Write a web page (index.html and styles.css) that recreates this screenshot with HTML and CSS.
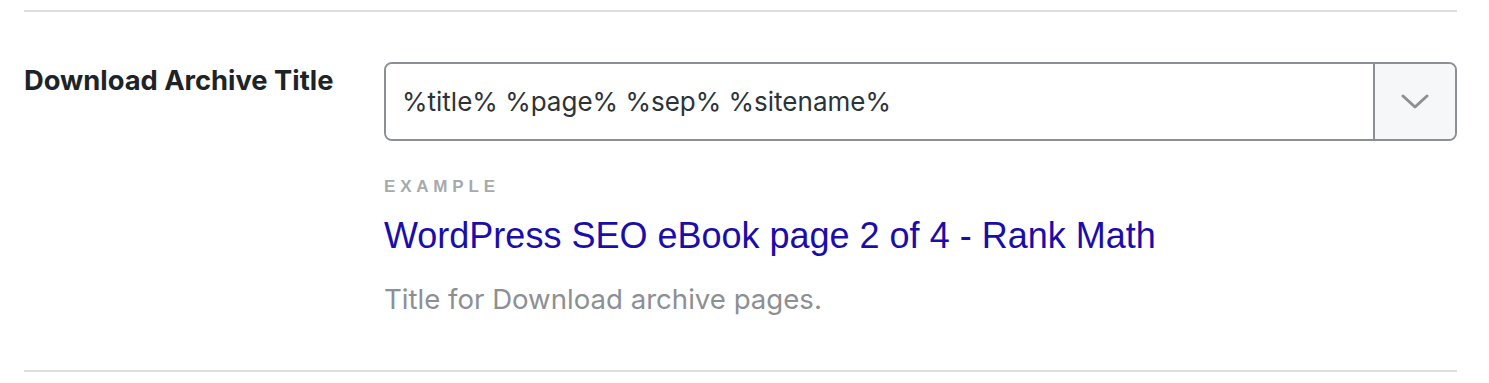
FILE: index.html
```html
<!DOCTYPE html>
<html lang="en">
<head>
  <meta charset="UTF-8">
  <title>Download Archive Title</title>
  <link rel="stylesheet" href="styles.css">
</head>
<body>
  <div class="settings">
    <!-- Archive title field -->
    <div class="field-row">
      <label class="field-label" for="archive-title">Download Archive Title</label>
      <div class="field-body">
        <div class="select-input">
          <input id="archive-title" type="text" value="%title% %page% %sep% %sitename%">
          <button class="select-toggle" type="button" aria-label="Insert variable">
            <svg width="28" height="15" viewBox="0 0 28 15" fill="none">
              <path d="M2 2 L14 13 L26 2" stroke="#8c8f94" stroke-width="3" stroke-linecap="round" stroke-linejoin="round"/>
            </svg>
          </button>
        </div>
        <div class="example">
          <span class="example-label">Example</span>
          <div class="example-title">WordPress SEO eBook page 2 of 4 - Rank Math</div>
        </div>
        <p class="field-desc">Title for Download archive pages.</p>
      </div>
    </div>
  </div>
</body>
</html>
```

FILE: styles.css
```css
* {
  margin: 0;
  padding: 0;
  box-sizing: border-box;
}

body {
  background-color: #fff;
  font-family: Inter, "Noto Sans", sans-serif;
  color: #1d2327;
}

.settings {
  padding: 10px 32px 0 24px;
}

/* Field row */
.field-row {
  display: flex;
  border-top: 2px solid #dcdfe2;
  border-bottom: 2px solid #dcdfe2;
  padding: 50px 0 54px;
}
.field-label {
  width: 360px;
  flex-shrink: 0;
  font-size: 27.3px;
  font-weight: 700;
  line-height: 38px;
  color: #1d2327;
}
.field-body {
  flex: 1;
}

/* Input with dropdown */
.select-input {
  display: flex;
  height: 79px;
  border: 2px solid #8c8f94;
  border-radius: 8px;
  overflow: hidden;
}
.select-input input {
  flex: 1;
  border: none;
  outline: none;
  padding: 0 16px;
  font-family: Inter, "Noto Sans", sans-serif;
  font-size: 26px;
  color: #2c3338;
  background: #fff;
}
.select-toggle {
  width: 82px;
  border: none;
  border-left: 2px solid #8c8f94;
  background-color: #f6f7f9;
  display: flex;
  align-items: center;
  justify-content: center;
}

/* Example preview */
.example {
  padding-top: 36px;
}
.example-label {
  display: block;
  font-family: "Liberation Sans", Arial, sans-serif;
  font-size: 17px;
  font-weight: 700;
  letter-spacing: 4.8px;
  text-transform: uppercase;
  color: #a7aaad;
  line-height: 20px;
}
.example-title {
  margin-top: 18px;
  font-family: "Liberation Sans", Arial, sans-serif;
  font-size: 36px;
  line-height: 42px;
  color: #1a0dab;
}

.field-desc {
  margin-top: 25px;
  font-size: 27.6px;
  line-height: 34px;
  color: #8c8f94;
}
```
